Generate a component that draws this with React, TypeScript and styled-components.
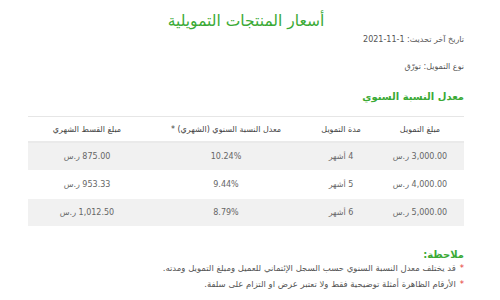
import React from 'react'
import styled, { createGlobalStyle } from 'styled-components'

const GlobalStyle = createGlobalStyle`
  body {
    margin: 0;
    background: #fff;
    font-family: "DejaVu Sans", "Noto Sans", sans-serif;
  }
`

const Page = styled.div`
  direction: rtl;
  width: 500px;
  height: 300px;
  box-sizing: border-box;
  padding: 12px 36px 0 28px;
  color: #555;
  overflow: hidden;
`

const Title = styled.h1`
  margin: 0 0 5px;
  text-align: center;
  font-size: 15.5px;
  font-weight: normal;
  color: #3aaa35;
`

const InfoLine = styled.p<{ $gap?: number }>`
  margin: 0 0 ${(p) => p.$gap ?? 18}px;
  font-size: 8px;
`

const Ltr = styled.bdi`
  direction: ltr;
  unicode-bidi: isolate;
`

const SectionTitle = styled.h3<{ $gap?: number }>`
  margin: 0 0 ${(p) => p.$gap ?? 14}px;
  font-size: 10px;
  font-weight: bold;
  color: #3aaa35;
`

const Table = styled.table`
  width: 100%;
  border-collapse: collapse;
  border-top: 1px solid #e6e6e6;
  font-size: 8px;
  margin-bottom: 22px;
`

const Th = styled.th<{ $w?: number }>`
  width: ${(p) => (p.$w ? `${p.$w}px` : 'auto')};
  height: 24px;
  padding: 0;
  font-weight: normal;
  color: #444;
  text-align: center;
  border-bottom: 2px solid #eaeaea;
`

const Row = styled.tr<{ $striped: boolean }>`
  background: ${(p) => (p.$striped ? '#f1f1f1' : '#fff')};
  border-bottom: 1px solid #fff;
`

const Td = styled.td`
  height: 27px;
  padding: 0;
  text-align: center;
  color: #666;
`

const Notes = styled.ul`
  list-style: none;
  margin: 0;
  padding: 0;
  font-size: 8.5px;
  line-height: 16px;
`

const Note = styled.li`
  &::before {
    content: '*';
    color: #e53935;
    margin-left: 4px;
  }
`

const rows = [
  { amount: '3,000.00', months: '4 أشهر', rate: '10.24%', monthly: '875.00' },
  { amount: '4,000.00', months: '5 أشهر', rate: '9.44%', monthly: '953.33' },
  { amount: '5,000.00', months: '6 أشهر', rate: '8.79%', monthly: '1,012.50' },
]

export default function App() {
  return (
    <Page>
      <GlobalStyle />
      <Title>أسعار المنتجات التمويلية</Title>
      <InfoLine>
        تاريخ آخر تحديث: <Ltr>2021-11-1</Ltr>
      </InfoLine>
      <InfoLine $gap={20}>نوع التمويل: تورّق</InfoLine>
      <SectionTitle>معدل النسبة السنوي</SectionTitle>
      <Table>
        <thead>
          <tr>
            <Th $w={88}>مبلغ التمويل</Th>
            <Th $w={70}>مدة التمويل</Th>
            <Th $w={160}>معدل النسبة السنوي (الشهري) *</Th>
            <Th>مبلغ القسط الشهري</Th>
          </tr>
        </thead>
        <tbody>
          {rows.map((r, i) => (
            <Row key={r.amount} $striped={i % 2 === 0}>
              <Td>{r.amount} ر.س</Td>
              <Td>{r.months}</Td>
              <Td>{r.rate}</Td>
              <Td>{r.monthly} ر.س</Td>
            </Row>
          ))}
        </tbody>
      </Table>
      <SectionTitle $gap={0}>ملاحظة:</SectionTitle>
      <Notes>
        <Note>قد يختلف معدل النسبة السنوي حسب السجل الإئتماني للعميل ومبلغ التمويل ومدته.</Note>
        <Note>الأرقام الظاهرة أمثلة توضيحية فقط ولا تعتبر عرض او التزام على سلفة.</Note>
      </Notes>
    </Page>
  )
}
